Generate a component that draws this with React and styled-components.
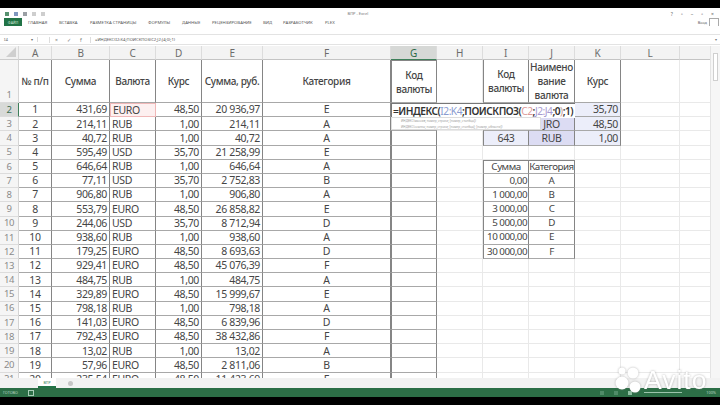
import React from "react";
import styled, { createGlobalStyle } from "styled-components";

const Global = createGlobalStyle`
  html, body { margin: 0; padding: 0; background: #000; }
  body { width: 720px; height: 405px; overflow: hidden; }
`;

const Page = styled.div`
  width: 720px; height: 405px; box-sizing: border-box;
  padding: 8px 0 8px; background: #000; overflow: hidden;
`;
const Win = styled.div`
  height: 389px; background: #fff; display: flex; flex-direction: column;
  font-family: "Noto Sans", "Open Sans", sans-serif; color: #444; position: relative;
  filter: blur(0.55px);
`;
const TitleBar = styled.div`
  height: 9px; display: flex; align-items: center; justify-content: space-between;
  padding: 1px 6px 0 5px; font-size: 4px; color: #777;
`;
const Quick = styled.div`display: flex; gap: 5px; align-items: center;`;
const QuickIcon = styled.span`
  width: 4px; height: 4px; display: block; background: ${p => p.$c || "#8a8f95"}; opacity: .85;
`;
const WinBtns = styled.div`display: flex; gap: 8px; font-size: 5px; color: #666;`;
const RibbonRow = styled.div`
  height: 8px; display: flex; align-items: center; justify-content: space-between; padding: 0 1px 0 4px;
`;
const Tabs = styled.div`display: flex; align-items: center; font-size: 4.3px; color: #555; padding-left: 0;`;
const FileTab = styled.div`
  width: 18px; height: 8px; margin-right: 6px; background: #217346; color: #cfe5d8; font-size: 3.6px;
  display: flex; align-items: center; justify-content: center;
`;
const Tab = styled.span`width: ${p => p.$w}px; white-space: nowrap; display: block;`;
const User = styled.div`display: flex; align-items: center; gap: 2px; font-size: 4px; color: #666;`;
const Avatar = styled.span`width: 8px; height: 7px; border: 1px solid #aaa; border-bottom: 0; display: block;`;
const RibbonGap = styled.div`height: 8px;`;
const FormulaBar = styled.div`
  height: 9px; display: flex; align-items: center; border-top: 1px solid #e3e3e3; border-bottom: 1px solid #e3e3e3;
  font-size: 4.2px; color: #666; box-sizing: content-box;
`;
const NameBox = styled.div`
  width: 38px; padding-left: 4px; box-sizing: border-box; display: flex; justify-content: space-between;
  padding-right: 4px; border-right: 1px solid #ddd;
`;
const FxBtns = styled.div`
  margin-left: 11px; width: 42px; display: flex; gap: 9px; padding-left: 5px; font-size: 5px; color: #777; border-left: 1px solid #ddd;
  border-right: 1px solid #ddd; box-sizing: border-box;
`;
const FormulaText = styled.div`margin-left: 4px; color: #555; flex: 1; white-space: nowrap;`;
const FormulaEnd = styled.div`padding-right: 3px; font-size: 4px; color: #777;`;
const SheetWrap = styled.div`
  flex: 1; position: relative; overflow: hidden; margin-top: 1px;
`;
const Grid = styled.div`
  display: grid;
  grid-template-columns: 19px 33px 58px 46px 46px 61px 128px 46px 46px 46px 46px 46px 59px 31px;
  grid-template-rows: 14px 43px repeat(20, 14.2px);
  font-size: 10.5px; letter-spacing: -0.35px; line-height: 1;
`;
const Corner = styled.div`
  background: #f1f1f1; border-right: 1px solid #d8d8d8; border-bottom: 1px solid #ccc;
  display: flex; align-items: flex-end; justify-content: flex-end; padding: 0 2px 2px 0;
`;
const CornerMark = styled.svg`width: 10px; height: 10px; display: block;`;
const ColHead = styled.div`
  display: flex; align-items: center; justify-content: center; font-size: 10px; color: ${p => p.$on ? "#2a6a46" : "#6c6c6c"};
  background: ${p => p.$on ? "#d6d8d6" : "#f3f3f3"}; border-right: 1px solid #dcdcdc; border-bottom: 1px solid ${p => p.$on ? "#3e7f5a" : "#c4c4c4"};
  box-sizing: border-box;
`;
const RowHead = styled.div`
  display: flex; align-items: ${p => p.$end ? "flex-end" : "center"}; justify-content: center; padding-bottom: ${p => p.$end ? 3 : 0}px;
  font-size: 9.5px; color: ${p => p.$on ? "#3e6f54" : "#8b8b8b"}; background: ${p => p.$on ? "#d8dad8" : "#f5f5f5"};
  border-right: 1px solid ${p => p.$on ? "#3e7f5a" : "#d4d4d4"}; border-bottom: 1px solid #dcdcdc; box-sizing: border-box;
`;
const Cell = styled.div`
  box-sizing: border-box; display: flex; align-items: center; overflow: hidden; white-space: nowrap;
  justify-content: ${p => p.$a === "r" ? "flex-end" : p.$a === "l" ? "flex-start" : "center"};
  padding: 0 ${p => p.$tight ? 1 : 2}px; color: #454545; text-align: center;
  background: ${p => p.$bg || "#fff"};
  border-right: 1px solid ${p => p.$t ? "#858585" : "#e9e9e9"};
  border-bottom: 1px solid ${p => p.$t ? "#a8a8a8" : "#e9e9e9"};
  ${p => p.$lb ? "border-left: 1px solid #858585;" : ""}
  ${p => p.$tb ? "border-top: 1px solid #858585;" : ""}
  ${p => p.$pink ? "border: 1px solid #f0b8b8;" : ""}
  ${p => p.$tight ? "font-size: 9.8px; letter-spacing: -0.5px;" : ""}
`;
const HeadText = styled.span`font-size: 10px; white-space: normal; line-height: 14px; font-weight: 500;`;
const CellEditor = styled.div`
  position: absolute; left: 391px; top: 57px; width: 184px; height: 15px; background: #fff; box-sizing: border-box;
  border: 1px solid #777; border-right: 0; border-bottom: 0; padding-left: 1px; display: flex; align-items: center;
  font-size: 10.2px; font-weight: 600; color: #333; letter-spacing: -0.5px; white-space: nowrap;
`;
const Ref = styled.span`color: ${p => p.$c}; font-weight: 400;`;
const Tip = styled.div`
  position: absolute; left: 391px; top: 71px; width: 150px; height: 13px; background: #fff; box-sizing: border-box;
  border: 1px solid #ddd; padding: 1px 0 0 9px; font-size: 3.1px; line-height: 5.6px; color: #999; white-space: nowrap; overflow: hidden;
`;
const Scroll = styled.div`
  position: absolute; right: 0; top: 0; bottom: 0; width: 9px; background: #f6f6f6; border-left: 1px solid #e4e4e4;
`;
const Thumb = styled.div`
  position: absolute; left: 2px; right: 2px; top: 7px; height: 26px; background: #fff; border: 1px solid #cfcfcf;
`;
const SheetBar = styled.div`
  height: 10px; display: flex; align-items: center; background: #f2f2f2; font-size: 3.6px; color: #666; padding-left: 38px;
  position: relative;
`;
const SheetTab = styled.div`
  width: 18px; height: 10px; background: #fff; border-bottom: 2px solid #217346; box-sizing: border-box;
  display: flex; align-items: center; justify-content: center; color: #2f7a50;
`;
const AddTab = styled.span`
  margin-left: 12px; width: 5px; height: 5px; border-radius: 50%; background: #c6c6c6; display: block;
`;
const StatusBar = styled.div`
  height: 9px; background: #2c6e46; display: flex; align-items: center; justify-content: space-between;
  padding: 0 4px 0 3px; font-size: 3.8px; color: #bcd6c6;
`;
const StatusLeft = styled.div`display: flex; align-items: center; gap: 10px;`;
const Rec = styled.span`width: 4px; height: 4px; border: 1px solid #a9ceb8; display: block;`;
const StatusRight = styled.div`display: flex; align-items: center; gap: 10px;`;
const ViewBtn = styled.span`width: 4px; height: 4px; background: ${p => p.$on ? "#8fc0a3" : "#4f8b68"}; display: block;`;
const Zoom = styled.span`width: 38px; height: 1px; background: #9cc4ac; display: block; margin: 0 14px 0 2px;`;
const Mark = styled.div`
  position: absolute; left: 613px; top: 358px; width: 98px; height: 30px;
`;
const MarkSvg = styled.svg`
  display: block; width: 100%; height: 100%; overflow: visible;
  filter: drop-shadow(0 0 1px rgba(120,120,120,.55));
`;
const MarkText = styled.text`
  font-family: "Liberation Sans", sans-serif; font-size: 26.5px; fill: #fff; letter-spacing: 1px;
`;

const rows = [
  [1,"431,69","EURO","48,50","20 936,97","E"],[2,"214,11","RUB","1,00","214,11","A"],
  [3,"40,72","RUB","1,00","40,72","A"],[4,"595,49","USD","35,70","21 258,99","E"],
  [5,"646,64","RUB","1,00","646,64","A"],[6,"77,11","USD","35,70","2 752,83","B"],
  [7,"906,80","RUB","1,00","906,80","A"],[8,"553,79","EURO","48,50","26 858,82","E"],
  [9,"244,06","USD","35,70","8 712,94","D"],[10,"938,60","RUB","1,00","938,60","A"],
  [11,"179,25","EURO","48,50","8 693,63","D"],[12,"929,41","EURO","48,50","45 076,39","F"],
  [13,"484,75","RUB","1,00","484,75","A"],[14,"329,89","EURO","48,50","15 999,67","E"],
  [15,"798,18","RUB","1,00","798,18","A"],[16,"141,03","EURO","48,50","6 839,96","D"],
  [17,"792,43","EURO","48,50","38 432,86","F"],[18,"13,02","RUB","1,00","13,02","A"],
  [19,"57,96","EURO","48,50","2 811,06","B"],[20,"235,54","EURO","48,50","11 423,69","E"],
];
const cols = ["A","B","C","D","E","F","G","H","I","J","K","L",""];
const rate = { 2: ["", "", "35,70"], 3: ["", "JRO", "48,50"], 4: ["643", "RUB", "1,00"] };
const cats = [["Сумма","Категория"],["0,00","A"],["1 000,00","B"],["3 000,00","C"],["5 000,00","D"],["10 000,00","E"],["30 000,00","F"]];
const tabs = [["ГЛАВНАЯ",31],["ВСТАВКА",31],["РАЗМЕТКА СТРАНИЦЫ",58],["ФОРМУЛЫ",34],["ДАННЫЕ",30],["РЕЦЕНЗИРОВАНИЕ",51],["ВИД",20],["РАЗРАБОТЧИК",42],["PLEX",12]];
const LAV = "#eceefa", LAVD = "#dcdcf3";

function RightCells({ r }) {
  const rt = rate[r];
  if (rt) {
    return <>
      <Cell $t $a="c" $lb $bg={LAV}>{rt[0]}</Cell>
      <Cell $t $a="c" $bg={LAVD}>{rt[1]}</Cell>
      <Cell $t $a="r" $bg={LAV}>{rt[2]}</Cell>
    </>;
  }
  const c = r >= 6 && r <= 12 ? cats[r - 6] : null;
  if (c) {
    return <>
      <Cell $t $tight $lb $tb={r === 6} $a={r === 6 ? "c" : "r"}>{c[0]}</Cell>
      <Cell $t $tight $tb={r === 6} $a="c">{c[1]}</Cell>
      <Cell />
    </>;
  }
  return <><Cell /><Cell /><Cell /></>;
}

export default function App() {
  return (
    <Page>
      <Global />
      <Win>
        <TitleBar>
          <Quick>
            <QuickIcon $c="#3b7f57" /><QuickIcon $c="#6a86b4" /><QuickIcon /><QuickIcon $c="#c5c5c5" /><QuickIcon $c="#c5c5c5" />
          </Quick>
          <span>ВПР - Excel</span>
          <WinBtns><span>?</span><span>▫</span><span>–</span><span>▫</span><span>×</span></WinBtns>
        </TitleBar>
        <RibbonRow>
          <Tabs>
            <FileTab>ФАЙЛ</FileTab>
            {tabs.map(([t, w]) => <Tab key={t} $w={w}>{t}</Tab>)}
          </Tabs>
          <User>Вход<Avatar /></User>
        </RibbonRow>
        <RibbonGap />
        <FormulaBar>
          <NameBox><span>I4</span><span>▾</span></NameBox>
          <FxBtns><span>×</span><span>✓</span><span>f</span></FxBtns>
          <FormulaText>=ИНДЕКС(I2:K4;ПОИСКПОЗ(C2;J2:J4;0);1)</FormulaText>
          <FormulaEnd>▾</FormulaEnd>
        </FormulaBar>
        <SheetWrap>
          <Grid>
            <Corner>
              <CornerMark viewBox="0 0 10 10"><path d="M10 0V10H0Z" fill="#cfcfcf" /></CornerMark>
            </Corner>
            {cols.map((c, i) => <ColHead key={i} $on={c === "G"}>{c}</ColHead>)}

            <RowHead $end>1</RowHead>
            {["№ п/п","Сумма","Валюта","Курс","Сумма, руб.","Категория"].map(h => (
              <Cell key={h} $t $a="c"><HeadText>{h}</HeadText></Cell>
            ))}
            <Cell $t $lb $tb $a="c"><HeadText>Код валюты</HeadText></Cell>
            <Cell />
            <Cell $t $lb $a="c"><HeadText>Код валюты</HeadText></Cell>
            <Cell $t $a="c"><HeadText>Наимено вание валюта</HeadText></Cell>
            <Cell $t $a="c"><HeadText>Курс</HeadText></Cell>
            <Cell /><Cell />

            {rows.map(d => {
              const r = d[0] + 1;
              return (
                <React.Fragment key={r}>
                  <RowHead $on={r === 2}>{r}</RowHead>
                  <Cell $t $a="c">{d[0]}</Cell>
                  <Cell $t $a="r">{d[1]}</Cell>
                  <Cell $t $a="l" $pink={r === 2} $bg={r === 2 ? "#fdf0f0" : undefined}>{d[2]}</Cell>
                  <Cell $t $a="r">{d[3]}</Cell>
                  <Cell $t $a="r">{d[4]}</Cell>
                  <Cell $t $a="c">{d[5]}</Cell>
                  <Cell $t $lb />
                  <Cell />
                  <RightCells r={r} />
                  <Cell /><Cell />
                </React.Fragment>
              );
            })}
          </Grid>
          <CellEditor>
            =ИНДЕКС(<Ref $c="#8a9bd0">I2:K4</Ref>;ПОИСКПОЗ(<Ref $c="#dc9a9a">C2</Ref>;<Ref $c="#a79ad0">J2:J4</Ref>;0<Ref $c="#c89a9a">)</Ref>;1)
          </CellEditor>
          <Tip>
            <div>ИНДЕКС(массив; номер_строки; [номер_столбца])</div>
            <div>ИНДЕКС(ссылка; номер_строки; [номер_столбца]; [номер_области])</div>
          </Tip>
          <Scroll><Thumb /></Scroll>
        </SheetWrap>
        <SheetBar>
          <SheetTab>ВПР</SheetTab>
          <AddTab />
        </SheetBar>
        <StatusBar>
          <StatusLeft><span>ГОТОВО</span><Rec /></StatusLeft>
          <StatusRight>
            <ViewBtn /><ViewBtn /><ViewBtn $on />
            <Zoom />
            <span>100%</span>
          </StatusRight>
        </StatusBar>
        <Mark>
          <MarkSvg viewBox="0 0 98 30">
            <circle cx="9" cy="17" r="6.5" fill="#fff" />
            <circle cx="20" cy="7" r="5.5" fill="#fff" />
            <circle cx="22" cy="21" r="5.5" fill="#fff" />
            <circle cx="9" cy="5" r="3.5" fill="#fff" />
            <MarkText x="31" y="23">Avito</MarkText>
          </MarkSvg>
        </Mark>
      </Win>
    </Page>
  );
}
